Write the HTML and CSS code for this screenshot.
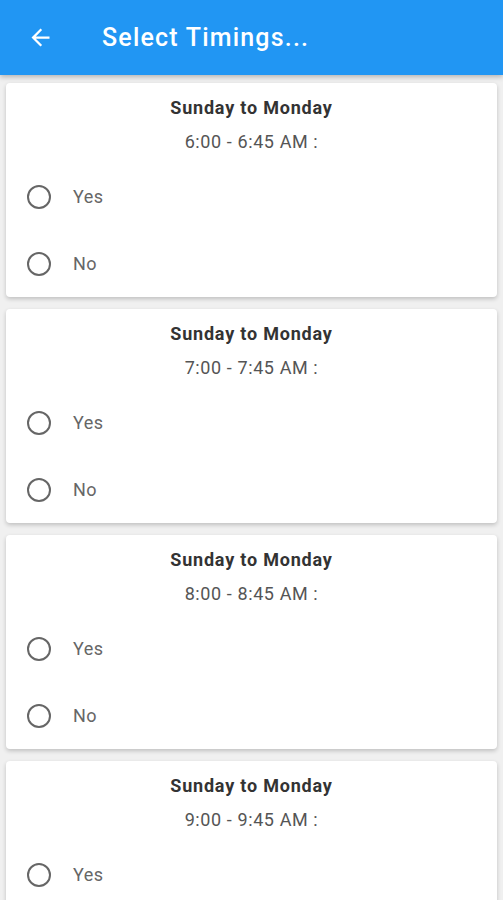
FILE: index.html
```html
<!DOCTYPE html>
<html lang="en">
<head>
    <meta charset="UTF-8">
    <meta name="viewport" content="width=device-width, initial-scale=1.0">
    <title>Select Timings</title>
    <link rel="stylesheet" href="styles.css">
</head>
<body>
    <header class="app-bar">
        <button class="back-btn" aria-label="Back">
            <svg width="24" height="24" viewBox="0 0 24 24">
                <path d="M20 11H7.83l5.59-5.59L12 4l-8 8 8 8 1.41-1.41L7.83 13H20v-2z" fill="#fff"/>
            </svg>
        </button>
        <h1 class="app-title">Select Timings...</h1>
    </header>

    <main class="slot-list">
        <section class="slot-card">
            <div class="slot-days">Sunday to Monday</div>
            <div class="slot-time">6:00 - 6:45 AM :</div>
            <div class="options">
                <label class="option"><span class="radio"></span>Yes</label>
                <label class="option"><span class="radio"></span>No</label>
            </div>
        </section>

        <section class="slot-card">
            <div class="slot-days">Sunday to Monday</div>
            <div class="slot-time">7:00 - 7:45 AM :</div>
            <div class="options">
                <label class="option"><span class="radio"></span>Yes</label>
                <label class="option"><span class="radio"></span>No</label>
            </div>
        </section>

        <section class="slot-card">
            <div class="slot-days">Sunday to Monday</div>
            <div class="slot-time">8:00 - 8:45 AM :</div>
            <div class="options">
                <label class="option"><span class="radio"></span>Yes</label>
                <label class="option"><span class="radio"></span>No</label>
            </div>
        </section>

        <section class="slot-card">
            <div class="slot-days">Sunday to Monday</div>
            <div class="slot-time">9:00 - 9:45 AM :</div>
            <div class="options">
                <label class="option"><span class="radio"></span>Yes</label>
            </div>
        </section>
    </main>
</body>
</html>
```

FILE: styles.css
```css
* {
    box-sizing: border-box;
    font-family: Roboto, 'Noto Sans', sans-serif;
}

body {
    margin: 0;
    background-color: #f0f0f0;
    overflow: hidden;
}

.app-bar {
    height: 75px;
    background-color: #2196f3;
    display: flex;
    align-items: center;
    padding-left: 16px;
    box-shadow: 0 2px 5px rgba(0, 0, 0, 0.25);
    position: relative;
}

.back-btn {
    width: 48px;
    height: 48px;
    border: none;
    background: none;
    padding: 0;
    display: flex;
    align-items: center;
    justify-content: center;
}

.back-btn svg {
    width: 27px;
    height: 27px;
}

.app-title {
    margin: 0 0 0 38px;
    color: #fff;
    font-size: 25px;
    font-weight: 500;
    letter-spacing: 1.2px;
}

.slot-list {
    padding: 8px 6px 0;
    display: flex;
    flex-direction: column;
    gap: 12px;
}

.slot-card {
    background-color: #fff;
    border-radius: 4px;
    box-shadow: 0 2px 4px rgba(0, 0, 0, 0.2);
    padding: 13px 0 0;
}

.slot-days {
    text-align: center;
    line-height: 24px;
    font-size: 18px;
    font-weight: 700;
    color: #333;
    letter-spacing: 0.8px;
}

.slot-time {
    text-align: center;
    margin-top: 10px;
    line-height: 24px;
    font-size: 18px;
    color: #555;
    letter-spacing: 0.6px;
}

.options {
    margin-top: 9px;
}

.option {
    height: 67px;
    display: flex;
    align-items: center;
    padding-left: 21px;
    font-size: 18px;
    color: #666;
    letter-spacing: 0.5px;
}

.radio {
    width: 24px;
    height: 24px;
    border: 2px solid #666;
    border-radius: 50%;
    margin-right: 22px;
}
```
